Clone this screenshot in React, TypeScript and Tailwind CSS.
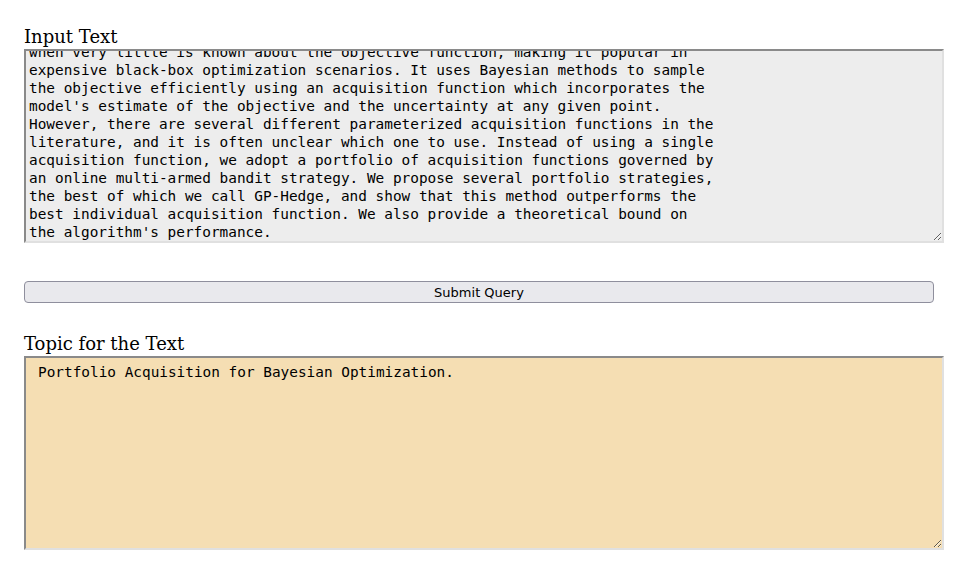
import { useEffect, useRef } from "react";

const ABSTRACT = `Bayesian optimization with Gaussian processes has become an increasingly
popular tool in the machine learning community. It is efficient and can be used
when very little is known about the objective function, making it popular in
expensive black-box optimization scenarios. It uses Bayesian methods to sample
the objective efficiently using an acquisition function which incorporates the
model's estimate of the objective and the uncertainty at any given point.
However, there are several different parameterized acquisition functions in the
literature, and it is often unclear which one to use. Instead of using a single
acquisition function, we adopt a portfolio of acquisition functions governed by
an online multi-armed bandit strategy. We propose several portfolio strategies,
the best of which we call GP-Hedge, and show that this method outperforms the
best individual acquisition function. We also provide a theoretical bound on
the algorithm's performance.`;

const Label = ({ children }: { children: string }) => (
  <div className="text-[18px] leading-[24px] text-black font-['DejaVu_Serif',serif]">
    {children}
  </div>
);

export default function App() {
  const inputRef = useRef<HTMLTextAreaElement>(null);

  useEffect(() => {
    if (inputRef.current) inputRef.current.scrollTop = inputRef.current.scrollHeight;
  }, []);

  return (
    <div className="bg-white min-h-[566px] px-6 pt-[25px]">
      <Label>Input Text</Label>
      <textarea
        ref={inputRef}
        readOnly
        defaultValue={ABSTRACT}
        className="block w-[920px] h-[194px] bg-[#ededed] border-2 border-t-[#8a8a8a] border-l-[#8a8a8a] border-b-[#e0e0e0] border-r-[#e0e0e0] px-[3px] pt-[1px] pb-0 text-[14.4px] leading-[18px] text-black font-['DejaVu_Sans_Mono',monospace] whitespace-pre overflow-hidden outline-none"
      />

      <button className="block mt-[38px] w-[910px] h-[22px] pt-[1px] rounded-[4px] border border-[#8f8f9d] bg-[#e9e9ed] text-[13px] text-black font-['DejaVu_Sans',sans-serif]">
        Submit Query
      </button>

      <div className="mt-[29px]">
        <Label>Topic for the Text</Label>
      </div>
      <textarea
        readOnly
        defaultValue="Portfolio Acquisition for Bayesian Optimization."
        className="block w-[920px] h-[194px] bg-[#f5deb3] border-2 border-t-[#8a8a8a] border-l-[#8a8a8a] border-b-[#e0e0e0] border-r-[#e0e0e0] px-3 py-[5px] text-[14.4px] leading-[18px] text-black font-['DejaVu_Sans_Mono',monospace] outline-none"
      />
    </div>
  );
}
